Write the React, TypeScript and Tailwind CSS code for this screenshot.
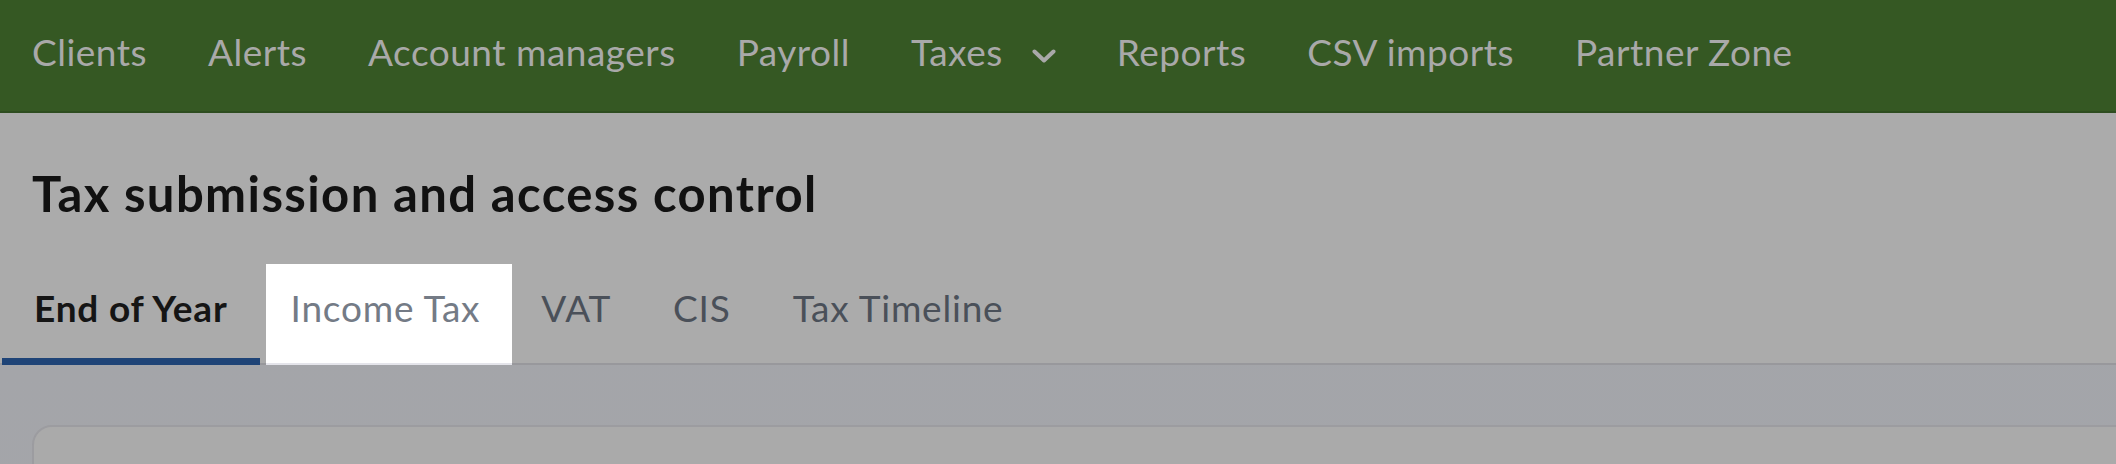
import React from 'react';

const NAV = ['Clients', 'Alerts', 'Account managers', 'Payroll', 'Taxes', 'Reports', 'CSV imports', 'Partner Zone'];
const TABS = ['End of Year', 'Income Tax', 'VAT', 'CIS', 'Tax Timeline'];

const font = { fontFamily: "Lato, 'Liberation Sans', sans-serif" };

function Chevron() {
  return (
    <svg viewBox="0 0 24 14" className="w-[24px] h-[14px] ml-[29px] mt-[19px]" fill="none" stroke="currentColor" strokeWidth={4} strokeLinecap="round" strokeLinejoin="round">
      <path d="M2.5 2.5L12 11.5L21.5 2.5" />
    </svg>
  );
}

export default function App() {
  return (
    <div className="w-[2116px] h-[464px] overflow-hidden bg-[#ababab]" style={font}>
      <nav className="h-[113px] bg-[#355823] border-b-2 border-[#2e4d20] flex items-start pt-[30px] pl-[32px] gap-[61px]">
        {NAV.map((item) => (
          <div key={item} className="flex items-start text-[37px] leading-[1.2] tracking-[0.5px] text-[#a9a9a9]">
            <span>{item}</span>
            {item === 'Taxes' && <Chevron />}
          </div>
        ))}
      </nav>

      <h1 className="pt-[51px] pl-[32px] text-[49px] leading-[1.2] tracking-[1.4px] font-bold text-[#111111]">
        Tax submission and access control
      </h1>

      <div className="mt-[41px] flex border-b-2 border-[#98989c] pl-[2px] text-[37px] leading-[1.2] tracking-[0.8px]">
        <div className="h-[101px] -mb-[2px] pt-[22px] px-[32px] font-bold text-[#151515] border-b-[7px] border-[#1f4477]">
          End of Year
        </div>
        <div className="h-[101px] -mb-[2px] pt-[22px] ml-[6px] pl-[25px] pr-[32px] bg-white text-[#747b86] border-b-2 border-[#e4e4ea]">
          Income Tax
        </div>
        {TABS.slice(2).map((tab) => (
          <div key={tab} className="h-[101px] -mb-[2px] pt-[22px] pl-[29px] pr-[33px] text-[#4a5059]">
            {tab}
          </div>
        ))}
      </div>

      <div className="h-[200px] bg-gradient-to-br from-[#a4a5a9] to-[#a3a5aa] pt-[60px] pl-[32px]">
        <div className="w-[2200px] h-[200px] rounded-tl-[20px] border-2 border-[#9c9ca0] bg-[#aaaaaa]" />
      </div>
    </div>
  );
}
